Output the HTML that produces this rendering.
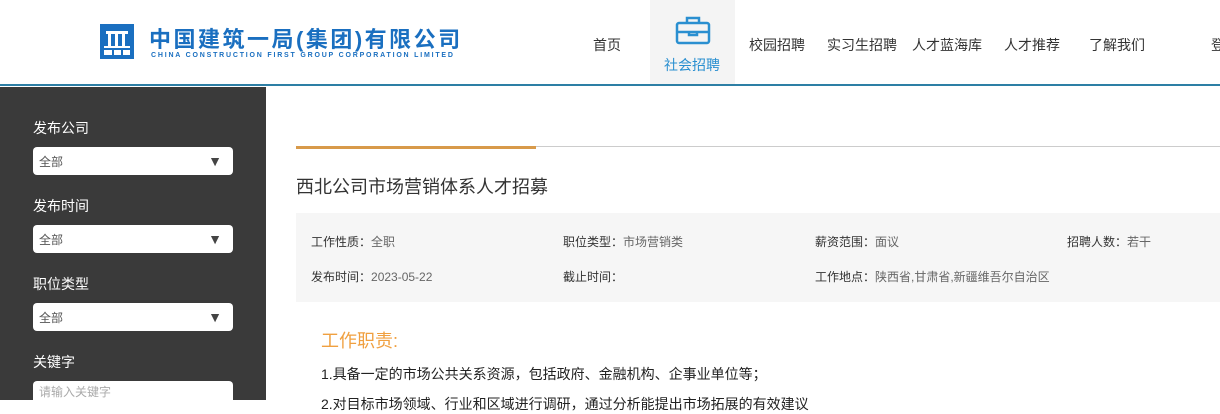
<!DOCTYPE html>
<html><head><meta charset="utf-8"><style>
*{margin:0;padding:0;box-sizing:border-box}
body{width:1220px;height:400px;overflow:hidden;background:#fff;font-family:"Liberation Sans","Noto Sans CJK SC",sans-serif;position:relative;color:#333}
.hdr{position:absolute;left:0;top:0;width:1220px;height:86px;border-bottom:2px solid #2d7fa5;background:#fff}
.nav{position:absolute;top:35px;font-size:14px;color:#333;white-space:nowrap}
.act{position:absolute;left:650px;top:0;width:85px;height:84px;background:#f4f4f4}
.side{position:absolute;left:0;top:87px;width:266px;height:313px;background:#3a3a3a}
.lbl{position:absolute;left:33px;font-size:14px;color:#fff}
.sel{position:absolute;left:33px;width:200px;height:28px;background:#fff;border-radius:4px;font-size:12px;color:#555;padding:6px 0 0 6px}
.sel.ar:after{content:"▼";position:absolute;right:11px;top:6px;font-size:14px;line-height:16px;color:#444}
.t{position:absolute;font-size:12px;color:#333;white-space:nowrap}
.t span{color:#666}
</style></head><body>
<div class="hdr">
 <svg style="position:absolute;left:100px;top:24px" width="34" height="35" viewBox="0 0 34 35"><rect width="34" height="35" fill="#1a6fc0"/><g fill="#fff"><rect x="6" y="7" width="22" height="3"/><rect x="8" y="10" width="3" height="12"/><rect x="15" y="10" width="3" height="12"/><rect x="22" y="10" width="3" height="12"/><rect x="4" y="22" width="26" height="2"/><rect x="4" y="26" width="8" height="5"/><rect x="14" y="26" width="7" height="5"/><rect x="23" y="26" width="7" height="5"/></g></svg>
 <div style="position:absolute;left:149px;top:22px;font-size:22px;font-weight:bold;color:#1a6fc0;letter-spacing:2.5px;white-space:nowrap">中国建筑一局(集团)有限公司</div>
 <div style="position:absolute;left:151px;top:52px;font-size:7px;font-weight:bold;color:#1a6fc0;letter-spacing:1.8px;white-space:nowrap">CHINA CONSTRUCTION FIRST GROUP CORPORATION LIMITED</div>
 <div class="act"></div>
 <svg style="position:absolute;left:675px;top:15px" width="36" height="30" viewBox="0 0 36 30" fill="none" stroke="#2a8fd0" stroke-width="2.5"><rect x="2" y="8" width="32" height="20" rx="2"/><path d="M12 8V3h12v5M2 17h32M14 17v3h8v-3"/></svg>
 <div class="nav" style="left:593px">首页</div>
 <div class="nav" style="left:664px;top:55px;color:#2a8fd0">社会招聘</div>
 <div class="nav" style="left:749px">校园招聘</div>
 <div class="nav" style="left:827px">实习生招聘</div>
 <div class="nav" style="left:912px">人才蓝海库</div>
 <div class="nav" style="left:1004px">人才推荐</div>
 <div class="nav" style="left:1089px">了解我们</div>
 <div class="nav" style="left:1211px">登</div>
</div>
<div class="side">
 <div class="lbl" style="top:31px">发布公司</div><div class="sel ar" style="top:60px">全部</div>
 <div class="lbl" style="top:109px">发布时间</div><div class="sel ar" style="top:138px">全部</div>
 <div class="lbl" style="top:187px">职位类型</div><div class="sel ar" style="top:216px">全部</div>
 <div class="lbl" style="top:265px">关键字</div><div class="sel" style="top:294px;color:#aaa;padding-top:2px">请输入关键字</div>
</div>
<div style="position:absolute;left:296px;top:146px;width:924px;height:1px;background:#ccc"></div>
<div style="position:absolute;left:296px;top:146px;width:240px;height:3px;background:#d89a4a"></div>
<div style="position:absolute;left:296px;top:173px;font-size:18px;color:#333">西北公司市场营销体系人才招募</div>
<div style="position:absolute;left:296px;top:213px;width:924px;height:89px;background:#f6f6f6"></div>
<div class="t" style="left:311px;top:233px">工作性质：<span>全职</span></div>
<div class="t" style="left:563px;top:233px">职位类型：<span>市场营销类</span></div>
<div class="t" style="left:815px;top:233px">薪资范围：<span>面议</span></div>
<div class="t" style="left:1067px;top:233px">招聘人数：<span>若干</span></div>
<div class="t" style="left:311px;top:268px">发布时间：<span>2023-05-22</span></div>
<div class="t" style="left:563px;top:268px">截止时间：</div>
<div class="t" style="left:815px;top:268px">工作地点：<span>陕西省,甘肃省,新疆维吾尔自治区</span></div>
<div style="position:absolute;left:321px;top:327px;font-size:18px;color:#f0a040">工作职责:</div>
<div style="position:absolute;left:321px;top:364px;font-size:14px;color:#222;white-space:nowrap">1.具备一定的市场公共关系资源，包括政府、金融机构、企事业单位等；</div>
<div style="position:absolute;left:321px;top:394px;font-size:14px;color:#222;white-space:nowrap">2.对目标市场领域、行业和区域进行调研，通过分析能提出市场拓展的有效建议</div>
</body></html>
